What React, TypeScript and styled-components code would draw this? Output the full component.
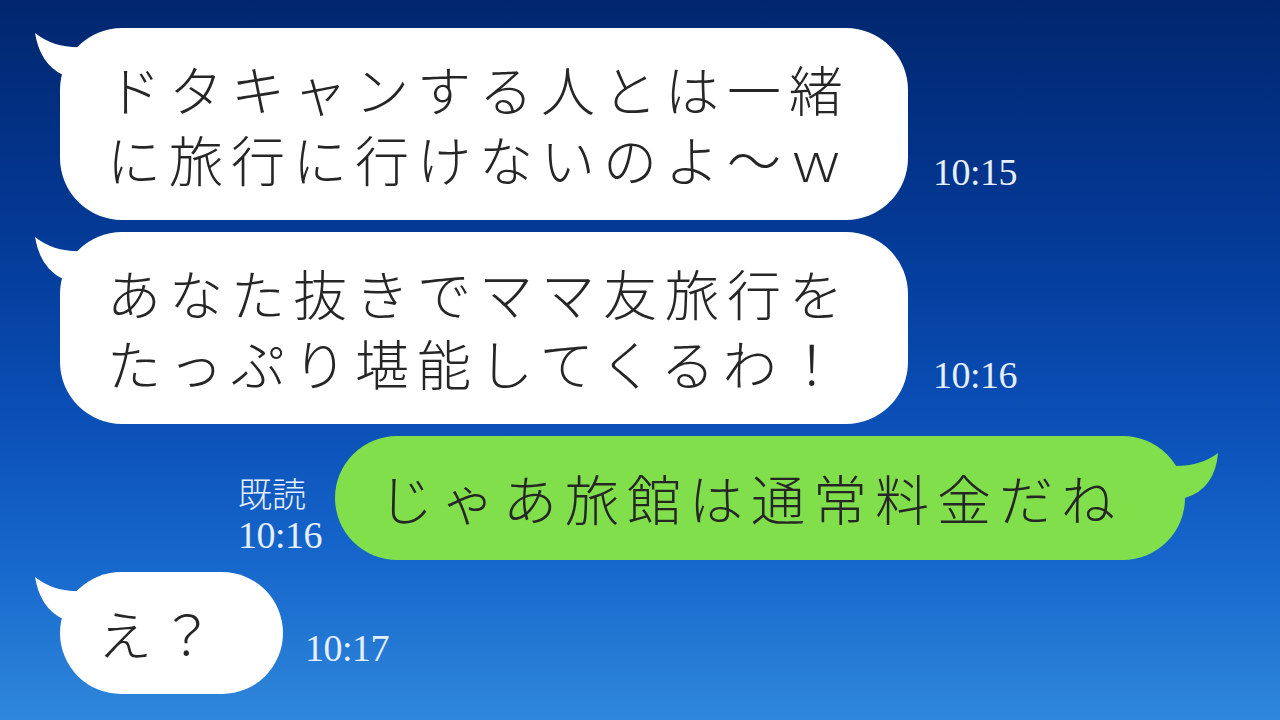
import React from "react";
import styled, { createGlobalStyle } from "styled-components";

const GlobalStyle = createGlobalStyle`
  html, body {
    margin: 0;
    padding: 0;
    width: 1280px;
    height: 720px;
    overflow: hidden;
  }
  body {
    font-family: "Noto Sans CJK JP", "Noto Sans", sans-serif;
  }
`;

const Screen = styled.div`
  width: 1280px;
  height: 720px;
  box-sizing: border-box;
  padding-top: 28px;
  display: flex;
  flex-direction: column;
  gap: 12px;
  background: linear-gradient(
    180deg,
    #01266e 0%,
    #033893 30%,
    #0a4fb6 58%,
    #1667cc 78%,
    #2f88da 100%
  );
`;

const Row = styled.div<{ $side: "left" | "right"; $gap: number }>`
  display: flex;
  align-items: flex-end;
  justify-content: ${(p) => (p.$side === "left" ? "flex-start" : "flex-end")};
  padding-left: ${(p) => (p.$side === "left" ? "60px" : "0")};
  padding-right: ${(p) => (p.$side === "right" ? "95px" : "0")};
  gap: ${(p) => p.$gap}px;
`;

const Bubble = styled.div<{ $green?: boolean; $padL: number; $padR: number; $padV: number }>`
  position: relative;
  background: ${(p) => (p.$green ? "#80df4a" : "#ffffff")};
  color: #262626;
  border-radius: 62px;
  padding: ${(p) => `${p.$padV}px ${p.$padR}px ${p.$padV}px ${p.$padL}px`};
  font-family: "Noto Sans CJK JP", "Noto Sans", sans-serif;
  font-weight: 300;
  font-size: 54px;
  letter-spacing: 8px;
  white-space: nowrap;
`;

const Line = styled.div`
  height: 70px;
  display: flex;
  align-items: center;
  line-height: 54px;
`;

const TailLeft = styled.svg`
  position: absolute;
  left: -30px;
  top: 0;
  width: 70px;
  height: 60px;
`;

const TailRight = styled.svg`
  position: absolute;
  right: -40px;
  top: 0;
  width: 60px;
  height: 70px;
`;

const Time = styled.div<{ $bottom: number }>`
  font-family: "Liberation Serif", "Noto Sans CJK JP", serif;
  font-size: 38px;
  line-height: 40px;
  color: #e6efff;
  margin-bottom: ${(p) => p.$bottom}px;
  letter-spacing: -0.5px;
`;

const Meta = styled.div`
  display: flex;
  flex-direction: column;
  align-items: flex-start;
  margin-bottom: 4px;
  color: #e6efff;
`;

const ReadMark = styled.div`
  font-family: "Noto Sans CJK JP", sans-serif;
  font-size: 34px;
  line-height: 42px;
  font-weight: 300;
`;

const MetaTime = styled.div`
  font-family: "Liberation Serif", serif;
  font-size: 38px;
  line-height: 42px;
  letter-spacing: -0.5px;
`;

const LeftTail = () => (
  <TailLeft viewBox="0 0 70 60">
    <path d="M5 5 Q 25 21 55 19 L 62 58 L 33 47 Q 10 36 5 5 Z" fill="#ffffff" />
  </TailLeft>
);

const RightTail = () => (
  <TailRight viewBox="0 0 60 70">
    <path d="M53 17 Q 35 31 6 30 L 6 68 L 20 62 Q 50 53 53 17 Z" fill="#80df4a" />
  </TailRight>
);

export default function App() {
  return (
    <>
      <GlobalStyle />
      <Screen>
        <Row $side="left" $gap={25}>
          <Bubble $padL={47} $padR={57} $padV={26}>
            <LeftTail />
            <Line>ドタキャンする人とは一緒</Line>
            <Line>に旅行に行けないのよ〜ｗ</Line>
          </Bubble>
          <Time $bottom={28}>10:15</Time>
        </Row>
        <Row $side="left" $gap={25}>
          <Bubble $padL={47} $padR={57} $padV={26}>
            <LeftTail />
            <Line>あなた抜きでママ友旅行を</Line>
            <Line>たっぷり堪能してくるわ！</Line>
          </Bubble>
          <Time $bottom={29}>10:16</Time>
        </Row>
        <Row $side="right" $gap={13}>
          <Meta>
            <ReadMark>既読</ReadMark>
            <MetaTime>10:16</MetaTime>
          </Meta>
          <Bubble $green $padL={44} $padR={62} $padV={27}>
            <RightTail />
            <Line>じゃあ旅館は通常料金だね</Line>
          </Bubble>
        </Row>
        <Row $side="left" $gap={22}>
          <Bubble $padL={38} $padR={61} $padV={26}>
            <LeftTail />
            <Line>え？</Line>
          </Bubble>
          <Time $bottom={26}>10:17</Time>
        </Row>
      </Screen>
    </>
  );
}
